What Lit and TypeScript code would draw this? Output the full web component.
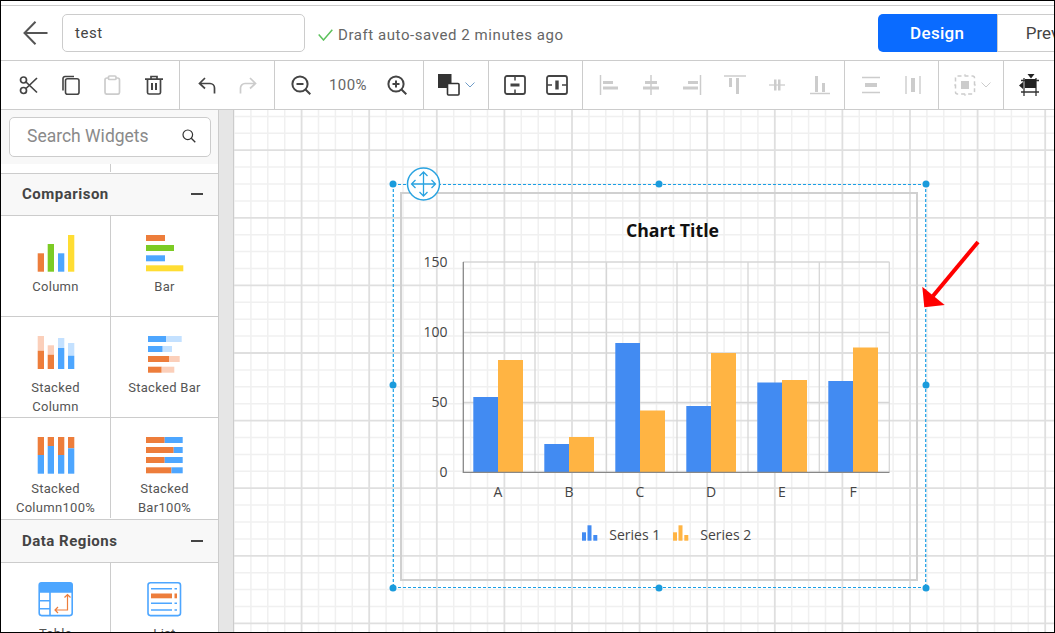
import { LitElement, html, css, svg } from "lit";
import { customElement } from "lit/decorators.js";

const DK = "#444";
const LT = "#ccc";
const OR = "#ed7d3b";
const BL = "#4da6ff";
const LOR = "#fbcfba";
const LBL = "#c4e1ff";

const ic = (w: number, h: number, body: unknown) =>
  html`<svg width=${w} height=${h} viewBox="0 0 ${w} ${h}" fill="none">${body}</svg>`;

const rects = (list: [number, number, number, number, string][]) =>
  list.map(([x, y, w, h, f]) => svg`<rect x=${x} y=${y} width=${w} height=${h} fill=${f}></rect>`);

const toolbarIcons = {
  cut: ic(20, 20, svg`<g stroke=${DK} stroke-width="1.7"><circle cx="4.5" cy="5" r="3"/><circle cx="4.5" cy="15.5" r="3"/><path d="M7 7 18 17.5M7 13.5 18 3"/></g>`),
  copy: ic(20, 20, svg`<g stroke=${DK} stroke-width="1.6"><path d="M2 15.5V3.5A2 2 0 0 1 4 1.5H13"/><rect x="4.5" y="3.8" width="13.5" height="15.4" rx="2"/></g>`),
  paste: ic(20, 20, svg`<g stroke=${LT} stroke-width="1.7"><rect x="3" y="3" width="14.5" height="16.2" rx="2"/><rect x="6.5" y="1" width="7.5" height="3.5" rx="1" fill="#fff"/></g>`),
  trash: ic(20, 20, svg`<g stroke=${DK} stroke-width="1.7"><path d="M1 4.2H19M7 4V1.5H13V4M3.5 4.5V17.5A1.6 1.6 0 0 0 5.1 19H14.9A1.6 1.6 0 0 0 16.5 17.5V4.5"/><path d="M8 8V15M12 8V15" stroke-width="2"/></g>`),
  undo: ic(18, 18, svg`<path d="M7 2 1.5 7.5 7 12.5M2 7.5H12A4.5 4.5 0 0 1 16.5 12V17.5" stroke=${DK} stroke-width="1.7"/>`),
  redo: ic(18, 18, svg`<path d="M11 2 16.5 7.5 11 12.5M16 7.5H6A4.5 4.5 0 0 0 1.5 12V17.5" stroke=${LT} stroke-width="1.7"/>`),
  zoomOut: ic(20, 20, svg`<g stroke=${DK} stroke-width="2"><circle cx="9" cy="9" r="7.6"/><path d="M14.5 14.5 19.3 19.3M5.5 9H12.5"/></g>`),
  zoomIn: ic(20, 20, svg`<g stroke=${DK} stroke-width="2"><circle cx="9" cy="9" r="7.6"/><path d="M14.5 14.5 19.3 19.3M5.5 9H12.5M9 5.5V12.5"/></g>`),
  color: ic(22, 22, svg`<rect x="0" y="0" width="13.5" height="14" fill="#333"/><rect x="9.5" y="9.5" width="11.5" height="11.5" rx="1" fill="#fff" stroke="#333" stroke-width="1.6"/>`),
  chev: ic(10, 6, svg`<path d="M.5 .5 5 5 9.5 .5" stroke="#6f9cc8" stroke-width="1"/>`),
  chevLt: ic(10, 6, svg`<path d="M.5 .5 5 5 9.5 .5" stroke=${LT} stroke-width="1"/>`),
  boxH: ic(22, 20, svg`<rect x="1" y="1" width="20" height="18" rx="2" stroke=${DK} stroke-width="1.8"/><path d="M11 1V5.5M11 14.500V19" stroke=${DK} stroke-width="1.5"/><path d="M6.500 10H15.500" stroke=${DK} stroke-width="3"/>`),
  boxV: ic(22, 20, svg`<rect x="1" y="1" width="20" height="18" rx="2" stroke=${DK} stroke-width="1.8"/><path d="M1 10H6M16 10H21" stroke=${DK} stroke-width="1.5"/><path d="M11 5.500V14.500" stroke=${DK} stroke-width="3.400"/>`),
  alignL: ic(20, 20, svg`<path d="M1.500 0V20" stroke=${LT} stroke-width="1.5"/>${rects([[4, 6, 10, 3, LT], [4, 11.500, 15, 3, LT]])}`),
  alignC: ic(20, 20, svg`<path d="M10 0V20" stroke=${LT} stroke-width="1.5"/>${rects([[4, 6, 12, 3, LT], [2, 11.500, 16, 3, LT]])}`),
  alignR: ic(20, 20, svg`<path d="M18.500 0V20" stroke=${LT} stroke-width="1.5"/>${rects([[6, 6, 10, 3, LT], [1, 11.500, 15, 3, LT]])}`),
  alignT: ic(22, 20, svg`<path d="M0 1H22" stroke=${LT} stroke-width="1.5"/>${rects([[5, 3, 3, 9, LT], [12, 3, 3, 16, LT]])}`),
  alignM: ic(20, 20, svg`<path d="M2 10H18" stroke=${LT} stroke-width="1.3"/>${rects([[7, 4.500, 2.500, 11, LT], [11, 4.500, 2.500, 11, LT]])}`),
  alignB: ic(22, 20, svg`<path d="M1 18.500H21" stroke=${LT} stroke-width="1.5"/>${rects([[6, 1, 3, 16, LT], [13, 8, 3, 9, LT]])}`),
  distV: ic(20, 20, svg`<path d="M1 2.500H19M1 17.500H19" stroke=${LT} stroke-width="1.400"/>${rects([[4, 8, 12, 4, LT]])}`),
  distH: ic(20, 20, svg`<path d="M3 1V19M17 1V19" stroke=${LT} stroke-width="1.400"/>${rects([[8, 3, 4, 14, LT]])}`),
  group: ic(22, 22, svg`<rect x="1.500" y="2" width="19" height="18" rx="2" stroke=${LT} stroke-width="1.500" stroke-dasharray="4 3"/>${rects([[7, 7, 8, 8, LT]])}<path d="M11 0 12.500 1.500H9.500ZM11 22 12.500 20.500H9.500ZM0 11 1.500 9.500V12.500ZM22 11 20.500 9.500V12.500Z" fill=${LT}/>`),
  crop: ic(22, 22, svg`<path d="M5 4V22M17 4V22M2 6.500H20M2 18H20" stroke="#333" stroke-width="1.300"/>${rects([[6, 5, 11, 9, "#222"]])}<path d="M8.500 0H15.500L12 4.500ZM0 11.500 4 8V15Z" fill="#222"/>`),
};

const chartIcons = {
  column: rects([[1.7, 18.3, 6.3, 18.4, OR], [11.7, 9, 6.3, 27.7, "#7ccb24"], [22, 18.3, 6.3, 18.4, BL], [32, 0, 6.3, 36.7, "#ffdd33"]]),
  bar: rects([[0, 0, 19, 6, OR], [0, 10, 28, 6, "#7ccb24"], [0, 20.300, 19, 6, BL], [0, 30.300, 37.300, 6, "#ffdd33"]]),
  stackedColumn: rects([
    [1.7, 0, 6.3, 14.700, LOR], [1.7, 14.700, 6.3, 18.300, OR],
    [11.7, 9.300, 6.3, 9.400, LOR], [11.7, 18.700, 6.3, 14.300, OR],
    [22, 2, 6.3, 10, LBL], [22, 12, 6.3, 21, BL],
    [32, 7, 6.3, 12.700, LBL], [32, 19.700, 6.3, 13.300, BL],
  ]),
  stackedBar: rects([
    [2, 0, 18.300, 6, BL], [20.300, 0, 15.400, 6, LBL],
    [2, 10, 14.700, 6, BL], [16.700, 10, 9.300, 6, LBL],
    [2, 20, 21, 6, OR], [23, 20, 10.700, 6, LOR],
    [2, 30.700, 13.700, 6, OR], [15.700, 30.700, 12.600, 6, LOR],
  ]),
  stackedColumn100: rects([
    [1.7, 0, 6.3, 18, OR], [1.7, 18, 6.3, 18.700, BL],
    [11.7, 0, 6.3, 9, OR], [11.7, 9, 6.3, 27.700, BL],
    [22, 0, 6.3, 18, OR], [22, 18, 6.3, 18.700, BL],
    [32, 0, 6.3, 11.300, OR], [32, 11.300, 6.3, 25.400, BL],
  ]),
  stackedBar100: rects([
    [0, 0, 18.700, 6, OR], [18.700, 0, 18, 6, BL],
    [0, 10, 27.700, 6, OR], [27.700, 10, 9, 6, BL],
    [0, 20, 18.700, 6, OR], [18.700, 20, 18, 6, BL],
    [0, 30.300, 25.400, 6, OR], [25.400, 30.300, 11.300, 6, BL],
  ]),
  table: svg`<rect x="1.200" y=".8" width="33" height="32.800" rx="2.500" stroke=${BL} stroke-width="1.600"/>
    <path d="M1 3A2.500 2.500 0 0 1 3.500 .5H32A2.500 2.500 0 0 1 34.500 3V10.700H1Z" fill=${BL}/>
    <path d="M12 10V33.500M1 18.700H12M1 26.700H12" stroke=${BL} stroke-width="1.600"/>
    <path d="M29.500 12.500V28H17M26.500 15.500 29.500 12.500 32.500 15.500M20 25 17 28 20 31" stroke=${OR} stroke-width="1.200"/>`,
  list: svg`<rect x="1" y=".8" width="32.500" height="32.800" rx="2.500" stroke=${BL} stroke-width="1.600"/>
    <path d="M4 6.700H25M4 21.300H25M4 28H25M27.500 6.700H30M27.500 21.300H30M27.500 28H30" stroke=${BL} stroke-width="1.600"/>
    <rect x="4" y="11.500" width="21" height="4.800" fill=${OR}/><rect x="27.500" y="11.500" width="2.500" height="4.800" fill=${OR}/>`,
};

const GRID_X0 = 234;
const GRID_Y0 = 116.4;
const STEP = 16.9;
const CHART_BARS: [number, number, number][] = [
  [473.3, 397, 360],
  [544.3, 444, 437],
  [615.3, 343, 410.5],
  [686.3, 406, 353],
  [757.3, 382.5, 380],
  [828.3, 381, 347.5],
];

@customElement("app-root")
export class AppRoot extends LitElement {
  static styles = css`
    :host {
      display: block;
      width: 1055px;
      height: 633px;
      font-family: Roboto, "Liberation Sans", sans-serif;
      color: #444;
    }
    * { box-sizing: border-box; }
    svg { display: block; flex: none; }
    .frame {
      width: 1055px;
      height: 633px;
      border: 1px solid #000;
      overflow: hidden;
      display: flex;
      flex-direction: column;
      background: #fff;
    }
    .header {
      flex: none;
      height: 55px;
      margin-top: 4px;
      border-top: 1px solid #ccc;
      padding: 0 0 1px 22px;
      display: flex;
      align-items: center;
      overflow: hidden;
    }
    .back { margin-right: 14px; }
    .name {
      flex: none;
      width: 243px;
      height: 38px;
      border: 1px solid #ccc;
      border-radius: 5px;
      padding-left: 12px;
      display: flex;
      align-items: center;
      font-size: 15px;
      letter-spacing: .55px;
      color: #444;
    }
    .status {
      flex: none;
      margin-left: 13px;
      margin-top: 4px;
      display: flex;
      align-items: center;
      gap: 5px;
      font-size: 15px;
      letter-spacing: .57px;
      color: #666;
    }
    .tabs {
      flex: none;
      margin-left: 314px;
      display: flex;
      height: 38px;
      font-size: 17px;
    }
    .tab {
      display: flex;
      align-items: center;
    }
    .tab.on {
      width: 119px;
      justify-content: center;
      background: #0a6bff;
      color: #fff;
      font-weight: 500;
      letter-spacing: .3px;
      border-radius: 5px 0 0 5px;
    }
    .tab.off {
      width: 110px;
      padding-left: 28px;
      border: 1px solid #ccc;
      color: #444;
    }
    .toolbar {
      flex: none;
      height: 50px;
      border-top: 1px solid #ccc;
      border-bottom: 1px solid #ccc;
      display: flex;
    }
    .group {
      flex: none;
      display: flex;
      align-items: center;
      border-right: 1px solid #ccc;
    }
    .g1 { width: 179px; padding-left: 18px; gap: 21.6px; }
    .g2 { width: 95px; padding-left: 18px; gap: 23px; }
    .g3 { width: 149px; padding-left: 16px; gap: 19px; }
    .g4 { width: 65px; padding-left: 14px; gap: 5px; }
    .g5 { width: 94px; padding-left: 15px; gap: 20px; }
    .g6 { width: 262px; padding-left: 16px; gap: 21.6px; }
    .g7 { width: 94px; padding-left: 15.500px; gap: 22px; }
    .g8 { width: 65px; padding-left: 15px; gap: 5px; }
    .g9 { padding-left: 15px; border-right: none; }
    .pct { font-size: 15px; letter-spacing: .4px; color: #666; width: 38px; margin: 0 1px 0 -1px; white-space: nowrap; }
    .main { flex: 1; min-height: 0; display: flex; }
    .side {
      flex: none;
      width: 218px;
      border-right: 1px solid #ccc;
      overflow: hidden;
    }
    .search-wrap {
      height: 54px;
      background: #f8f8f8;
      padding: 7px 0 0 8px;
    }
    .search {
      width: 202px;
      height: 40px;
      background: #fff;
      border: 1px solid #ccc;
      border-radius: 5px;
      padding: 0 14px 2px 17px;
      display: flex;
      align-items: center;
      justify-content: space-between;
      font-size: 17.500px;
      color: #8a8a8a;
    }
    .stub {
      height: 10px;
      border-bottom: 1px solid #ccc;
      display: grid;
      grid-template-columns: 110px;
    }
    .stub i { border-right: 1px solid #ccc; height: 8px; }
    .head {
      height: 42px;
      background: #f8f8f8;
      border-bottom: 1px solid #ccc;
      padding: 0 15px 1px 21px;
      display: flex;
      align-items: center;
      justify-content: space-between;
      font-size: 15px;
      font-weight: 700;
      letter-spacing: .5px;
      color: #444;
    }
    .head.second { height: 44px; border-top: 1px solid #ccc; }
    .head b { width: 12px; height: 2px; background: #444; }
    .cells {
      display: grid;
      grid-template-columns: 110px 107px;
    }
    .cell {
      height: 101px;
      padding-top: 19px;
      border-bottom: 1px solid #ccc;
      display: flex;
      flex-direction: column;
      align-items: center;
      text-align: center;
      font-size: 13px;
      line-height: 19px;
      letter-spacing: .3px;
      color: #555;
    }
    .cell:nth-child(odd) { border-right: 1px solid #ccc; }
    .cell.last { border-bottom: none; height: 100px; margin-bottom: 1px; }
    .cell svg { margin-bottom: 4px; }
    .strip {
      flex: none;
      width: 15px;
      background: #e6e6e6;
      border-right: 1px solid #ccc;
    }
    .canvas { flex: 1; min-width: 0; position: relative; overflow: hidden; }
    .canvas svg { position: absolute; left: 0; top: 0; }
    .ctext { font-family: "Open Sans", "Liberation Sans", sans-serif; font-size: 14px; fill: #444; }
    .ctitle { font-family: "Open Sans", "Liberation Sans", sans-serif; font-size: 17.700px; font-weight: 700; fill: #111; }
  `;

  private cell(label: unknown, icon: unknown, w: number, last = false) {
    return html`<div class="cell ${last ? "last" : ""}">
      <svg width=${w} height="38" viewBox="0 0 ${w} 38" fill="none">${icon}</svg>
      <span>${label}</span>
    </div>`;
  }

  private grid() {
    const out: unknown[] = [];
    for (let i = 0; i < 50; i++) {
      const x = GRID_X0 + i * STEP;
      const major = i % 4 === 0 && i > 0;
      if (!major) out.push(svg`<line x1=${x} x2=${x} y1="110" y2="633" stroke="#f0f0f0" stroke-width="1.5"/>`);
    }
    for (let i = 0; i < 32; i++) {
      const y = GRID_Y0 + i * STEP;
      if ((i - 2) % 4 !== 0) out.push(svg`<line x1="234" x2="1055" y1=${y} y2=${y} stroke="#f0f0f0" stroke-width="1.5"/>`);
    }
    for (let i = 1; i < 50; i += 1) {
      if (i % 4 === 0) {
        const x = GRID_X0 + i * STEP;
        out.push(svg`<line x1=${x} x2=${x} y1="110" y2="633" stroke="#dfdfdf" stroke-width="1.8"/>`);
      }
    }
    for (let i = 2; i < 32; i += 4) {
      const y = GRID_Y0 + i * STEP;
      out.push(svg`<line x1="234" x2="1055" y1=${y} y2=${y} stroke="#dfdfdf" stroke-width="1.8"/>`);
    }
    return out;
  }

  private chart() {
    const vx = [535, 606.5, 677, 748, 819.300, 889.300];
    const hy = [262, 332.500, 402.500];
    const labels = ["A", "B", "C", "D", "E", "F"];
    const handles: [number, number][] = [[393, 184], [659, 184], [926, 184], [393, 385], [926, 385], [393, 588], [659, 588], [926, 588]];
    return svg`
      <rect x="401" y="193" width="516" height="387" fill="none" stroke="#d0d0d0" stroke-width="2"/>
      ${hy.map((y) => svg`<line x1="463" x2="889.500" y1=${y} y2=${y} stroke="#d6d6d6" stroke-width="1.300"/>`)}
      ${vx.map((x) => svg`<line x1=${x} x2=${x} y1="262" y2="472" stroke="#d6d6d6" stroke-width="1.300"/>`)}
      ${CHART_BARS.map(([x, a, b]) => svg`
        <rect x=${x} y=${a} width="24.700" height=${472 - a} fill="#428bf2"/>
        <rect x=${x + 24.700} y=${b} width="25" height=${472 - b} fill="#ffb443"/>`)}
      <path d="M463.300 262V472.400H889.500" fill="none" stroke="#888" stroke-width="1.300"/>
      <text class="ctitle" x="672.500" y="237" text-anchor="middle">Chart Title</text>
      ${[["150", 262], ["100", 332], ["50", 402], ["0", 472]].map(([t, y]) => svg`<text class="ctext" x="447.500" y=${(y as number) + 5} text-anchor="end">${t}</text>`)}
      ${labels.map((t, i) => svg`<text class="ctext" x=${498 + i * 71} y="497" text-anchor="middle">${t}</text>`)}
      ${[[0, "#428bf2", "Series 1"], [91, "#ffb443", "Series 2"]].map(([dx, c, t]) => svg`<g transform="translate(${dx} 0)">
        <rect x="582" y="532.300" width="4" height="8.400" fill=${c as string}/>
        <rect x="587.500" y="525.300" width="4" height="15.400" fill=${c as string}/>
        <rect x="593.300" y="535" width="4" height="5.700" fill=${c as string}/>
        <text class="ctext" x="609.300" y="540">${t}</text></g>`)}
      <g stroke="#1a9fe6" stroke-width="1.200" stroke-dasharray="3 2" fill="none">
        <path d="M393 184.500H926"/>
        <path d="M393 587.500H926"/>
        <path d="M393.300 184V588"/>
        <path d="M925.700 184V588"/>
      </g>
      ${handles.map(([x, y]) => svg`<circle cx=${x} cy=${y} r="3.500" fill="#1a9bdc"/>`)}
      <circle cx="423.500" cy="184" r="16" fill="#fff" stroke="#2aa3e0" stroke-width="1.500"/>
      <path d="M423.500 172V196M411.500 184H435.500M419.500 176 423.500 172 427.500 176M419.500 192 423.500 196 427.500 192M415.500 180 411.500 184 415.500 188M431.500 180 435.500 184 431.500 188" fill="none" stroke="#2aa3e0" stroke-width="1.300"/>
      <path d="M978 242 933 296" fill="none" stroke="#f00" stroke-width="4"/>
      <path d="M922.300 286.700 924.300 307.300 944.700 305Z" fill="#f00"/>
    `;
  }

  render() {
    const t = toolbarIcons;
    return html`<div class="frame">
      <div class="header">
        <svg class="back" width="25" height="24" viewBox="0 0 25 24" fill="none"><path d="M12.500 .8 1.500 12 12.500 23.200M2 12H24.500" stroke="#555" stroke-width="2"/></svg>
        <div class="name">test</div>
        <div class="status">
          <svg width="15" height="12" viewBox="0 0 15 12" fill="none"><path d="M.7 5.500 5.500 11 14.300 .7" stroke="#5cc15c" stroke-width="1.500"/></svg>
          <span>Draft auto-saved 2 minutes ago</span>
        </div>
        <div class="tabs">
          <div class="tab on">Design</div>
          <div class="tab off">Preview</div>
        </div>
      </div>
      <div class="toolbar">
        <div class="group g1">${t.cut}${t.copy}${t.paste}${t.trash}</div>
        <div class="group g2">${t.undo}${t.redo}</div>
        <div class="group g3">${t.zoomOut}<span class="pct">100%</span>${t.zoomIn}</div>
        <div class="group g4">${t.color}${t.chev}</div>
        <div class="group g5">${t.boxH}${t.boxV}</div>
        <div class="group g6">${t.alignL}${t.alignC}${t.alignR}${t.alignT}${t.alignM}${t.alignB}</div>
        <div class="group g7">${t.distV}${t.distH}</div>
        <div class="group g8">${t.group}${t.chevLt}</div>
        <div class="group g9">${t.crop}</div>
      </div>
      <div class="main">
        <div class="side">
          <div class="search-wrap">
            <div class="search">
              <span>Search Widgets</span>
              <svg width="14" height="14" viewBox="0 0 14 14" fill="none"><circle cx="5.800" cy="5.800" r="4.800" stroke="#333" stroke-width="1.200"/><path d="M9.300 9.300 13.300 13.300" stroke="#333" stroke-width="1.300"/></svg>
            </div>
          </div>
          <div class="stub"><i></i></div>
          <div class="head"><span>Comparison</span><b></b></div>
          <div class="cells">
            ${this.cell("Column", chartIcons.column, 40)}
            ${this.cell("Bar", chartIcons.bar, 38)}
            ${this.cell(html`Stacked<br />Column`, chartIcons.stackedColumn, 40)}
            ${this.cell("Stacked Bar", chartIcons.stackedBar, 38)}
            ${this.cell(html`Stacked<br />Column100%`, chartIcons.stackedColumn100, 40, true)}
            ${this.cell(html`Stacked<br />Bar100%`, chartIcons.stackedBar100, 38, true)}
          </div>
          <div class="head second"><span>Data Regions</span><b></b></div>
          <div class="cells">
            ${this.cell("Table", chartIcons.table, 36)}
            ${this.cell("List", chartIcons.list, 35)}
          </div>
        </div>
        <div class="strip"></div>
        <div class="canvas">
          <svg width="820" height="522" viewBox="234 110 820 522">${this.grid()}${this.chart()}</svg>
        </div>
      </div>
    </div>`;
  }
}
